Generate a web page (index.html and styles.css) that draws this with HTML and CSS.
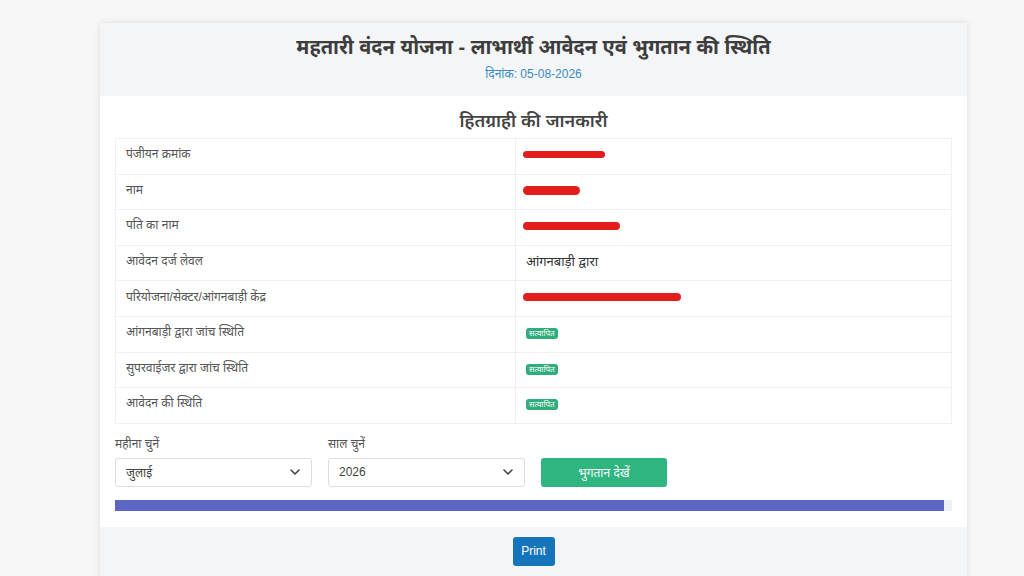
FILE: index.html
```html
<!DOCTYPE html>
<html lang="hi">
<head>
<meta charset="utf-8">
<title>महतारी वंदन योजना</title>
<link rel="stylesheet" href="styles.css">
</head>
<body>
<div class="card">
  <div class="card-header">
    <h1 class="title">महतारी वंदन योजना - लाभार्थी आवेदन एवं भुगतान की स्थिति</h1>
    <div class="date">दिनांक: 05-08-2026</div>
  </div>
  <div class="card-body">
    <h2 class="section-title">हितग्राही की जानकारी</h2>
    <table class="info">
      <tr><td class="lbl">पंजीयन क्रमांक</td><td class="val"><span class="redact r1"></span></td></tr>
      <tr><td class="lbl">नाम</td><td class="val"><span class="redact r2"></span></td></tr>
      <tr><td class="lbl">पति का नाम</td><td class="val"><span class="redact r3"></span></td></tr>
      <tr><td class="lbl">आवेदन दर्ज लेवल</td><td class="val strong">आंगनबाड़ी द्वारा</td></tr>
      <tr><td class="lbl">परियोजना/सेक्टर/आंगनबाड़ी केंद्र</td><td class="val"><span class="redact r5"></span></td></tr>
      <tr><td class="lbl">आंगनबाड़ी द्वारा जांच स्थिति</td><td class="val"><span class="badge">सत्यापित</span></td></tr>
      <tr><td class="lbl">सुपरवाईजर द्वारा जांच स्थिति</td><td class="val"><span class="badge">सत्यापित</span></td></tr>
      <tr><td class="lbl">आवेदन की स्थिति</td><td class="val"><span class="badge">सत्यापित</span></td></tr>
    </table>
    <div class="form-row">
      <div class="field">
        <label class="flabel">महीना चुनें</label>
        <div class="select"><span>जुलाई</span><svg width="12" height="8" viewBox="0 0 12 8"><path d="M2 2l4 4 4-4" fill="none" stroke="#444" stroke-width="1.6" stroke-linecap="round" stroke-linejoin="round"/></svg></div>
      </div>
      <div class="field">
        <label class="flabel">साल चुनें</label>
        <div class="select"><span class="num">2026</span><svg width="12" height="8" viewBox="0 0 12 8"><path d="M2 2l4 4 4-4" fill="none" stroke="#444" stroke-width="1.6" stroke-linecap="round" stroke-linejoin="round"/></svg></div>
      </div>
      <div class="field btn-field">
        <button class="btn-green">भुगतान देखें</button>
      </div>
    </div>
    <div class="progress"><div class="progress-bar" style="width: 99%"></div></div>
  </div>
  <div class="card-footer">
    <button class="btn-print">Print</button>
  </div>
</div>
</body>
</html>
```
FILE: styles.css
```css
* { box-sizing: border-box; }
html, body { margin: 0; padding: 0; }
body {
  background: #f7f7f7;
  font-family: "Liberation Sans", "Noto Sans", "Noto Sans Devanagari", sans-serif;
  color: #444;
  padding-top: 23px;
  height: 576px;
  overflow: hidden;
}
.card {
  width: 867px;
  margin-left: 100px;
  background: #fff;
  box-shadow: 0 0 6px rgba(0,0,0,0.12);
}
.card-header {
  background: #f4f5f6;
  height: 73px;
  text-align: center;
  padding-top: 10px;
}
.title {
  margin: 0;
  font-size: 20px;
  font-weight: 700;
  color: #3d3d3d;
  line-height: 28px;
}
.date {
  font-size: 12px;
  color: #3a8cc0;
  margin-top: 6px;
  line-height: 14px;
}
.card-body {
  padding: 12px 15px 16px;
}
.section-title {
  margin: 0;
  text-align: center;
  font-size: 18px;
  font-weight: 600;
  color: #444;
  line-height: 24px;
  margin-top: 1px;
  margin-bottom: 5px;
}
.info {
  width: 100%;
  border-collapse: collapse;
  border: 1px solid #f0f1f2;
}
.info td {
  height: 35.6px;
  padding: 0 10px;
  border-top: 1px solid #eef0f1;
  font-size: 12px;
  vertical-align: middle;
  padding-bottom: 5px;
}
.info td.lbl {
  width: 400px;
  color: #555;
  border-right: 1px solid #f0f1f2;
}
.info td.val { color: #444; }
.info td.strong { font-weight: 400; font-size: 13px; color: #333; }
.redact {
  display: inline-block;
  background: #e31c1c;
  border-radius: 6px;
  vertical-align: middle;
  margin-left: -3px;
}
.r1 { width: 82px; height: 7px; }
.r2 { width: 57px; height: 9px; border-radius: 8px; }
.r3 { width: 97px; height: 8px; }
.r5 { width: 158px; height: 8px; }
.badge {
  display: inline-block;
  background: #2fae7c;
  color: #fff;
  font-size: 8px;
  line-height: 11px;
  padding: 0 3px;
  border-radius: 3px;
  margin-top: 4px;
}
.form-row {
  display: flex;
  gap: 16px;
  margin-top: 12px;
  align-items: flex-end;
}
.field { width: 197px; }
.flabel {
  display: block;
  font-size: 12px;
  color: #555;
  line-height: 16px;
  margin-bottom: 6px;
}
.select {
  height: 29px;
  border: 1px solid #dcdfe2;
  border-radius: 3px;
  display: flex;
  align-items: center;
  justify-content: space-between;
  padding: 0 10px 0 10px;
  font-size: 12px;
  color: #444;
}
.btn-field { width: 126px; }
.btn-green {
  width: 126px;
  height: 29px;
  background: #2fb57f;
  color: #fff;
  border: 0;
  border-radius: 3px;
  font-family: inherit;
  font-size: 12px;
}
.progress {
  margin-top: 13px;
  height: 11px;
  background: #eef1f4;
}
.progress-bar {
  height: 100%;
  background: #5c67c3;
}
.card-footer {
  background: #f4f5f6;
  height: 60px;
  display: flex;
  justify-content: center;
  padding-top: 10px;
}
.btn-print {
  width: 42px;
  height: 29px;
  background: #1475ba;
  color: #fff;
  border: 0;
  border-radius: 3px;
  font-family: "Liberation Sans", sans-serif;
  font-size: 12px;
  padding: 0;
}
```
